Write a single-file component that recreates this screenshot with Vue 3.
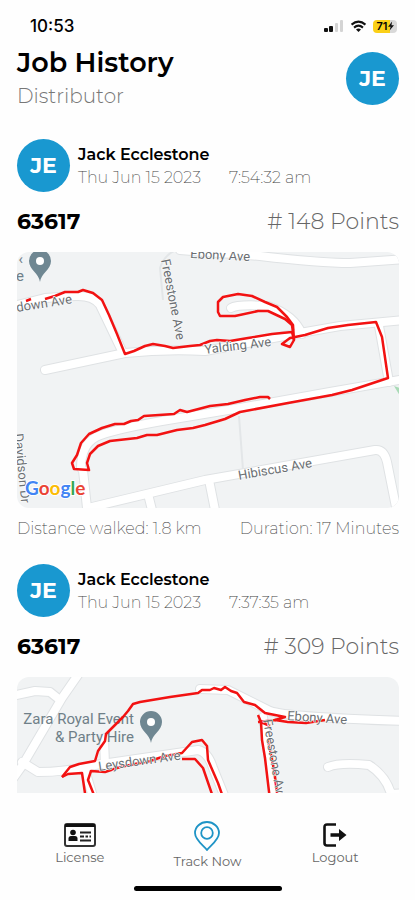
<script setup>
import {ref} from 'vue';

const user = {
  initials: 'JE',
  name: 'Jack Ecclestone',
  role: 'Distributor',
};

const jobs = ref([
  {
    id: 1,
    date: 'Thu Jun 15 2023',
    time: '7:54:32 am',
    number: '63617',
    points: 148,
    distance: '1.8 km',
    duration: '17 Minutes',
    map: {
      viewBox: '17 252 382 256',
      logo: true,
      minorRoads: [
        'M163 300L160 268Q164 256 174 251',
        'M239 416L243 470',
      ],
      roads: [
        'M10 307L45 298L75 296Q93 295 100 305L123 353',
        'M45 370L125 353Q165 349 205 351L300 333L340 326L405 320',
        'M180 250L205 252L260 256Q320 263 350 263L405 259',
        'M231 308Q238 304 268 306Q294 315 302 334',
        'M379 326L389 382',
        'M83 470L87 508M81 468Q81 445 96 437Q112 429 180 418L240 408L330 392L405 379',
        'M88 508L205 480L375 450Q384 449 387 462L397 512',
        'M148 494L152 510',
        'M209 480L215 510',
      ],
      route: [
        'M26 301L31 299M45 299L55 296L65 292L78 292L83 290L93 293L102 300L109 315L117 334L125 354L134 351L145 346L153 344L165 346L173 348L190 346L200 345L210 341L217 340L230 341L248 338L272 334L292 332L294 340L290 347L282 344L290 338L305 335L328 328L348 325L376 322L382 337L388 378L352 390L332 395L288 403L240 412L225 419L205 425L193 428L177 430L157 435L147 435L137 438L110 441L98 446L90 454L87 463L89 470L74 469L72 463L77 455L81 443L89 434L102 428L115 424L124 424L131 421L138 420L144 416L174 414L180 410L187 412L210 406L228 404L245 400L260 397L268 397L270 399',
        'M294 340L293 325L287 317L277 307L265 302L252 296L238 294L223 297L218 302L218 312L220 316L235 316L258 311L268 311L285 319L292 325L294 340',
      ],
      streets: [
        {text: 'down Ave', x: 17, y: 312, angle: -9},
        {text: 'Ebony Ave', x: 190, y: 258, angle: 3},
        {text: 'Freestone Ave', x: 161, y: 260, angle: 79},
        {text: 'Yalding Ave', x: 205, y: 354, angle: -7},
        {text: 'Hibiscus Ave', x: 239, y: 480, angle: -10},
        {text: 'Davidson Dr', x: 14, y: 434, angle: 84},
      ],
      places: [
        {text: '‹', x: 23, y: 264},
        {text: 'e', x: 24, y: 281},
      ],
      pin: {x: 40, y: 282},
    },
  },
  {
    id: 2,
    date: 'Thu Jun 15 2023',
    time: '7:37:35 am',
    number: '63617',
    points: 309,
    distance: '2.9 km',
    duration: '24 Minutes',
    map: {
      viewBox: '17 677 382 256',
      logo: false,
      minorRoads: [],
      roads: [
        'M12 696L35 691L50 692L60 700',
        'M80 672L62 698L22 766L12 780',
        'M22 762L38 772Q66 772 95 765L198 750Q208 752 213 768L226 800',
        'M104 738L105 765',
        'M85 770L94 800',
        'M200 689L228 690L270 711Q285 717 405 721',
        'M263 717L275 800',
        'M328 767Q340 762 369 765Q386 776 391 794L405 793',
      ],
      route: [
        'M62 777L70 767L79 764L95 761L98 751L105 741L106 734L113 727L123 717L128 711L133 704L140 702L170 697L198 693L202 690L210 690L214 688L221 690L225 687L231 691L237 693L244 702L255 705L265 713L275 715L285 717L275 720L288 722L306 723L325 720',
        'M62 777L68 774L82 773L86 800M96 800L88 780L91 771L105 772L120 767L135 764L150 761L165 756L182 753L192 742L202 740L207 746L208 760L218 783L224 800M182 759L195 759L203 768L214 800',
        'M276 720L258 722M258 715L261 722L262 740L265 758L270 800M261 722L270 726M268 740L271 755L274 770L278 800',
      ],
      streets: [
        {text: 'Leysdown Ave', x: 99, y: 771, angle: -8},
        {text: 'Ebony Ave', x: 287, y: 720, angle: 4},
        {text: 'Freestone Ave', x: 263, y: 720, angle: 80},
      ],
      places: [
        {text: 'Zara Royal Event', x: 134, y: 724},
        {text: '& Party Hire', x: 134, y: 742},
      ],
      pin: {x: 151, y: 743},
    },
  },
]);

const logo = [
  {letter: 'G', color: '#4285f4'},
  {letter: 'o', color: '#ea4335'},
  {letter: 'o', color: '#fbbc05'},
  {letter: 'g', color: '#4285f4'},
  {letter: 'l', color: '#34a853'},
  {letter: 'e', color: '#ea4335'},
];
</script>

<template>
  <div class="screen">
    <div class="status">
      <span class="status__time">10:53</span>
      <div class="status__icons">
        <svg class="signal" viewBox="0 0 20 14">
          <rect x="0" y="9" width="4" height="4" rx="1" fill="#111"/>
          <rect x="5" y="7" width="4" height="6" rx="1" fill="#111"/>
          <rect x="11" y="4" width="3" height="9" rx="1" fill="#d4d4d4"/>
          <rect x="16" y="1" width="3" height="12" rx="1" fill="#d4d4d4"/>
        </svg>
        <svg class="wifi" viewBox="0 0 18 14">
          <path d="M1.5 5Q9-1.5 16.5 5" fill="none" stroke="#111" stroke-width="2.2"/>
          <path d="M4.2 8.2Q9 4 13.8 8.2" fill="none" stroke="#111" stroke-width="2.2"/>
          <path d="M6.3 10.2Q9 8 11.7 10.2L9 13Z" fill="#111"/>
        </svg>
        <div class="battery">
          <span class="battery__level">71</span>
          <svg class="battery__bolt" viewBox="0 0 8 12">
            <path d="M5.5 0L0 7H3.4L2.2 12L8 5H4.6Z" fill="#111"/>
          </svg>
        </div>
      </div>
    </div>

    <header class="header">
      <div>
        <h1 class="header__title">Job History</h1>
        <p class="header__role">{{ user.role }}</p>
      </div>
      <div class="avatar">{{ user.initials }}</div>
    </header>

    <main class="jobs">
      <article v-for="job in jobs" :key="job.id" class="job">
        <div class="job__head">
          <div class="avatar">{{ user.initials }}</div>
          <div>
            <h2 class="job__name">{{ user.name }}</h2>
            <p class="job__date">
              <span>{{ job.date }}</span>
              <span>{{ job.time }}</span>
            </p>
          </div>
        </div>
        <div class="job__row">
          <strong class="job__number">{{ job.number }}</strong>
          <span class="job__points"># {{ job.points }} Points</span>
        </div>
        <svg class="map" :viewBox="job.map.viewBox">
          <g class="map__casing">
            <path v-for="road in job.map.roads" :key="road" :d="road"/>
          </g>
          <g class="map__minor">
            <path v-for="road in job.map.minorRoads" :key="road" :d="road"/>
          </g>
          <g class="map__road">
            <path v-for="road in job.map.roads" :key="road" :d="road"/>
          </g>
          <path v-if="job.map.logo" d="M394 386l6 2v8z" fill="#a8dab5"/>
          <text v-for="place in job.map.places" :key="place.text" class="map__place" :x="place.x" :y="place.y">{{ place.text }}</text>
          <g class="map__route" stroke-width="2.5">
            <path v-for="line in job.map.route" :key="line" :d="line"/>
          </g>
          <text v-for="street in job.map.streets" :key="street.text" class="map__street"
                :transform="`translate(${street.x} ${street.y}) rotate(${street.angle})`">{{ street.text }}</text>
          <g :transform="`translate(${job.map.pin.x} ${job.map.pin.y})`">
            <path d="M0 0C-1-9-11-12-11-21A11 11 0 0 1 11-21C11-12 1-9 0 0Z" fill="#6f8792"/>
            <circle cy="-21" r="4" fill="#fff"/>
          </g>
          <text v-if="job.map.logo" class="map__logo" x="25" y="495">
            <tspan v-for="(item, index) in logo" :key="index" :fill="item.color">{{ item.letter }}</tspan>
          </text>
        </svg>
        <div class="job__foot">
          <span>Distance walked: {{ job.distance }}</span>
          <span>Duration: {{ job.duration }}</span>
        </div>
      </article>
    </main>

    <nav class="nav">
      <a class="nav__item" href="#license">
        <svg class="nav__icon nav__icon_license" viewBox="0 0 32 24">
          <rect x="1" y="1" width="30" height="22" rx="2" fill="#fff" stroke="#333" stroke-width="2"/>
          <path d="M1 1H31V4H1Z" fill="#111"/>
          <circle cx="9" cy="9.5" r="2.8" fill="#111"/>
          <path d="M4.5 18V15.5Q4.5 13 7 13H11Q13.5 13 13.5 15.5V18Z" fill="#111"/>
          <path d="M16 9.5H27M16 13.5H20M21.5 13.5H24M25.5 13.5H27M16 17.5H27" stroke="#222" stroke-width="1.8"/>
        </svg>
        <span>License</span>
      </a>
      <a class="nav__item nav__item_track" href="#track">
        <svg class="nav__icon nav__icon_track" viewBox="0 0 26 30">
          <path d="M13 29C10 25 1 19 1 12A12 11 0 0 1 25 12C25 19 16 25 13 29Z" fill="none" stroke="#1f94c6" stroke-width="1.8"/>
          <circle cx="13" cy="12" r="5.8" fill="none" stroke="#1f94c6" stroke-width="1.8"/>
        </svg>
        <span>Track Now</span>
      </a>
      <a class="nav__item" href="#logout">
        <svg class="nav__icon nav__icon_logout" viewBox="0 0 24 24">
          <path d="M13 1.5H4Q1.5 1.5 1.5 4V20Q1.5 22.5 4 22.5H13" fill="none" stroke="#111" stroke-width="2.6"/>
          <path d="M7.5 10.2H16V6L23.5 12L16 18V13.8H7.5Z" fill="#111"/>
        </svg>
        <span>Logout</span>
      </a>
    </nav>
    <div class="home"></div>
  </div>
</template>

<style>
body {
  margin: 0;
  background: #fefefe;
}
</style>

<style scoped>
.screen {
  display: flex;
  flex-direction: column;
  height: 100vh;
  overflow: hidden;
  font-family: Montserrat, Inter, sans-serif;
  color: #000;
  background: #fefefe;
}

h1, h2, p {
  margin: 0;
}

.status {
  display: flex;
  flex: none;
  justify-content: space-between;
  align-items: center;
  height: 42px;
  padding: 5px 18px 0 30px;
}

.status__time {
  font-family: Inter, sans-serif;
  font-size: 17px;
  font-weight: 500;
}

.status__icons {
  display: flex;
  align-items: center;
  gap: 6px;
}

.signal {
  width: 20px;
  height: 14px;
}

.wifi {
  width: 17px;
  height: 13px;
}

.battery {
  display: flex;
  justify-content: center;
  align-items: center;
  width: 24px;
  height: 13px;
  border-radius: 4px;
  background: linear-gradient(90deg, #fbd017 72%, #d9d9d9 72%);
}

.battery__level {
  font-family: Inter, sans-serif;
  font-size: 11px;
  font-weight: 600;
}

.battery__bolt {
  width: 6px;
  height: 10px;
}

.header {
  display: flex;
  flex: none;
  justify-content: space-between;
  align-items: center;
  padding: 0 16px 0 17px;
}

.header__title {
  font-size: 27px;
  font-weight: 600;
  line-height: 32px;
}

.header__role {
  font-size: 20px;
  font-weight: 300;
  line-height: 34px;
  color: #777;
}

.avatar {
  display: flex;
  flex: none;
  justify-content: center;
  align-items: center;
  width: 53px;
  height: 53px;
  border-radius: 50%;
  background: #1998d0;
  color: #fff;
  font-size: 22px;
  font-weight: 700;
}

.header .avatar {
  margin-bottom: 4px;
}

.jobs {
  flex: 1;
  min-height: 0;
  padding: 26px 16px 0 17px;
  overflow-y: auto;
  scrollbar-width: none;
}

.job {
  margin-bottom: 22px;
}

.job__head {
  display: flex;
  align-items: center;
  gap: 8px;
}

.job__name {
  font-size: 16px;
  font-weight: 600;
  line-height: 24px;
}

.job__date {
  display: flex;
  gap: 28px;
  font-size: 16px;
  font-weight: 200;
  line-height: 22px;
  color: #444;
}

.job__row {
  display: flex;
  justify-content: space-between;
  align-items: center;
  margin: 14px 0;
  line-height: 32px;
}

.job__number {
  font-size: 22px;
  font-weight: 700;
}

.job__points {
  font-size: 22px;
  font-weight: 300;
  color: #666;
}

.map {
  display: block;
  width: 100%;
  border-radius: 12px;
  background: #f1f3f4;
}

.map path {
  stroke-linejoin: round;
}

.map__casing {
  fill: none;
  stroke: #dfe2e4;
  stroke-width: 10px;
}

.map__minor {
  fill: none;
  stroke: #e3e6e8;
  stroke-width: 2px;
}

.map__road {
  fill: none;
  stroke: #fff;
  stroke-width: 8px;
}

.map__casing path, .map__road path {
  stroke-linecap: round;
}

.map__route {
  fill: none;
  stroke: #f21212;
}

.map__street {
  font-family: Roboto, sans-serif;
  font-size: 13px;
  fill: #6b6f73;
  stroke: #fff;
  stroke-width: 1px;
  paint-order: stroke;
}

.map__place {
  font-family: Roboto, sans-serif;
  font-size: 15px;
  fill: #6f7f88;
  text-anchor: end;
}

.map__logo {
  font-family: Lato, sans-serif;
  font-size: 19px;
  font-weight: 700;
  stroke: #fff;
  stroke-width: 2px;
  paint-order: stroke;
}

.job__foot {
  display: flex;
  justify-content: space-between;
  margin-top: 8px;
  font-size: 16px;
  font-weight: 200;
  line-height: 26px;
  color: #444;
}

.nav {
  display: grid;
  flex: none;
  grid-template-columns: repeat(3, 1fr);
  align-items: start;
  padding: 28px 16px 0;
}

.nav__item {
  display: flex;
  flex-direction: column;
  align-items: center;
  gap: 1px;
  color: #666;
  font-size: 13px;
  line-height: 18px;
  text-decoration: none;
}

.nav__icon_license {
  width: 32px;
  height: 24px;
  margin-top: 2px;
}

.nav__icon_track {
  width: 26px;
  height: 30px;
}

.nav__icon_logout {
  width: 24px;
  height: 24px;
  margin-top: 2px;
}

.home {
  flex: none;
  width: 148px;
  height: 5px;
  margin: 16px auto 9px;
  border-radius: 3px;
  background: #000;
}
</style>
